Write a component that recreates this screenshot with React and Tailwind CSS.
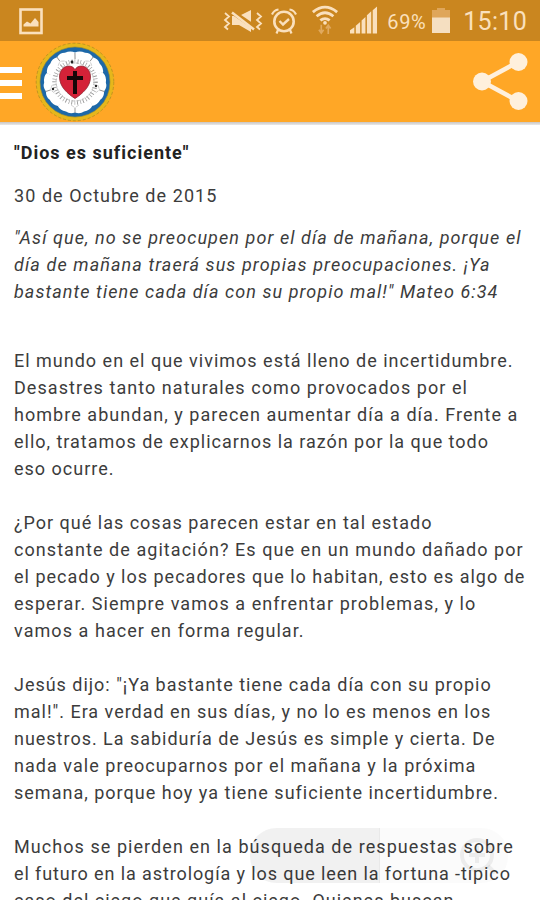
const quote = [
  { text: '"Así que, no se preocupen por el día de mañana, porque el', tracking: 'tracking-[1.07px]' },
  { text: 'día de mañana traerá sus propias preocupaciones. ¡Ya', tracking: 'tracking-[1.09px]' },
  { text: 'bastante tiene cada día con su propio mal!" Mateo 6:34', tracking: 'tracking-[1.06px]' },
];

const paragraphs = [
  [
    { text: 'El mundo en el que vivimos está lleno de incertidumbre.' },
    { text: 'Desastres tanto naturales como provocados por el', tracking: 'tracking-[1.06px]' },
    { text: 'hombre abundan, y parecen aumentar día a día. Frente a', tracking: 'tracking-[1.04px]' },
    { text: 'ello, tratamos de explicarnos la razón por la que todo', tracking: 'tracking-[0.98px]' },
    { text: 'eso ocurre.' },
  ],
  [
    { text: '¿Por qué las cosas parecen estar en tal estado' },
    { text: 'constante de agitación? Es que en un mundo dañado por', tracking: 'tracking-[1.06px]' },
    { text: 'el pecado y los pecadores que lo habitan, esto es algo de' },
    { text: 'esperar. Siempre vamos a enfrentar problemas, y lo', tracking: 'tracking-[1.06px]' },
    { text: 'vamos a hacer en forma regular.', tracking: 'tracking-[1.06px]' },
  ],
  [
    { text: 'Jesús dijo: "¡Ya bastante tiene cada día con su propio', tracking: 'tracking-[0.98px]' },
    { text: 'mal!". Era verdad en sus días, y no lo es menos en los', tracking: 'tracking-[0.98px]' },
    { text: 'nuestros. La sabiduría de Jesús es simple y cierta. De', tracking: 'tracking-[0.98px]' },
    { text: 'nada vale preocuparnos por el mañana y la próxima', tracking: 'tracking-[1.04px]' },
    { text: 'semana, porque hoy ya tiene suficiente incertidumbre.', tracking: 'tracking-[1.01px]' },
  ],
  [
    { text: 'Muchos se pierden en la búsqueda de respuestas sobre', tracking: 'tracking-[1.06px]' },
    { text: 'el futuro en la astrología y los que leen la fortuna -típico', tracking: 'tracking-[0.9px]' },
    { text: 'caso del ciego que guía al ciego. Quienes buscan' },
  ],
];

function Lines({ lines, className = '' }) {
  return (
    <p className={className}>
      {lines.map((line) => (
        <span key={line.text} className={`block whitespace-nowrap ${line.tracking || ''}`}>{line.text}</span>
      ))}
    </p>
  );
}

function PictureIcon() {
  return (
    <svg className="ml-[19px] mt-px h-[27px] w-6" viewBox="0 0 24 27" fill="none">
      <rect x="1.5" y="1.5" width="21" height="23.5" stroke="#fae0bd" strokeWidth="2.6" />
      <path d="M4.500 18.500v-2l3.500-3 3.500 2 4.500-5.500 3.500 4v4.500z" fill="#fae0bd" />
    </svg>
  );
}

function MutedIcon() {
  return (
    <svg className="h-[26px] w-[40px] shrink-0" viewBox="0 0 40 26" fill="none">
      <path d="M9 8h7l12-6v22l-12-7H9z" fill="#fae0bd" />
      <path d="M8 3l26 18" stroke="#ca861f" strokeWidth="5" />
      <path d="M9 4.500l22 17" stroke="#fae0bd" strokeWidth="2.600" />
      <path d="M2 5l4 3.500-4 3.500 4 3.500-4 3.500 3 2.500M34 5l4 3.500-4 3.500 4 3.500-4 3.500 3 2.500" stroke="#fae0bd" strokeWidth="1.800" />
    </svg>
  );
}

function AlarmIcon() {
  return (
    <svg className="ml-2 mt-0.5 h-[27px] w-[26px] shrink-0" viewBox="0 0 26 27" fill="none" stroke="#fae0bd">
      <circle cx="13" cy="13.500" r="9.700" strokeWidth="2.600" />
      <path d="M8.500 13l3.500 3.500 6-5.500" strokeWidth="2.400" />
      <path d="M1 6.500Q3 2 7.500 1.500M25 6.500Q23 2 18.500 1.500M7 22l-1.500 3.500M19 22l1.500 3.500" strokeWidth="2.200" />
    </svg>
  );
}

function WifiIcon() {
  return (
    <svg className="ml-[14px] -mt-0.5 h-8 w-[28px] shrink-0" viewBox="0 0 30 32" fill="none">
      <g stroke="#fae0bd" strokeWidth="3">
        <path d="M2 7.500Q15-3 28 7.500" />
        <path d="M6 12Q15 4.500 24 12" />
        <path d="M10 16.500Q15 12.500 20 16.500" />
      </g>
      <circle cx="15" cy="19" r="2" fill="#fae0bd" />
      <path d="M11 21v9M8.500 26.500l2.500 3.500L13.500 26.500M18.500 31v-9M16 25l2.500-3.500L21 25" stroke="#e0a95e" strokeWidth="1.800" />
    </svg>
  );
}

function SignalIcon() {
  return (
    <svg className="ml-[11px] h-[29px] w-[28px] shrink-0" viewBox="0 0 29 29" fill="#fae0bd">
      <path d="M0 28v-3.500l4.500-3V28zM6 28v-8l4.500-4v12zM12 28V14.500l4-3.500v17zM17.500 28V9l4.500-4v23zM23.500 28V4L28 0v28z" />
    </svg>
  );
}

function BatteryIcon() {
  return (
    <svg className="ml-[6px] h-[26px] w-[18px] shrink-0" viewBox="0 0 18 26">
      <path d="M0 2h5V0h8v2h5v9H0z" fill="#dfa65a" />
      <path d="M0 9.500h18V25H0z" fill="#f5dfc1" />
    </svg>
  );
}

const petals = [36, 108, 180, 252, 324];

function LutherRose() {
  return (
    <svg className="ml-[13px] h-20 w-20 shrink-0" viewBox="-40 -40 80 80">
      <circle r="39" fill="#e6b71b" />
      <circle r="38.800" fill="none" stroke="#b58c22" strokeWidth="0.800" strokeDasharray="3 2" />
      <circle r="35" fill="#1d68a8" stroke="#8c8a3a" strokeWidth="0.600" />
      <circle r="28" fill="#fff" />
      {petals.map((a) => (
        <g key={a} transform={`rotate(${a})`}>
          <path d="M0-30.500Q5-32.500 9-29.500Q15-28.500 17.500-23.500L10-10H-10L-17.500-23.500Q-15-28.500-9-29.500Q-5-32.500 0-30.500Z" fill="#fff" />
          <path d="M0-31v5.500M17-23.500l-3.500 5" stroke="#8d8d8d" strokeWidth="0.900" />
          <path d="M-1-25l-3 2M1-25l3 2" stroke="#c0c0c0" strokeWidth="0.700" />
        </g>
      ))}
      <circle r="20.500" fill="none" stroke="#999" strokeWidth="4.500" strokeDasharray="0.900 1.900 0.600 2.400" />
      <circle r="19" fill="none" stroke="#bdbdbd" strokeWidth="1" strokeDasharray="3 2" />
      <g fill="#222">
        <circle cx="-3" cy="-20" r="1.400" />
        <circle cx="21" cy="4" r="1.200" />
        <circle cx="-22" cy="7" r="1.200" />
      </g>
      <path d="M0 16.500C-7 12-15.500 5-15.500-5C-15.500-16-4-19 0-12.500C4-19 15.500-16 15.500-5C15.500 5 7 12 0 16.500Z" fill="#d42238" stroke="#8e2530" strokeWidth="0.800" />
      <path d="M-2-11h4v5h6v4H2v14h-4V-2h-6v-4h6z" fill="#160708" />
    </svg>
  );
}

function ShareIcon() {
  return (
    <svg className="mr-[12px] h-[60px] w-14 shrink-0" viewBox="0 0 56 60" fill="#fff0dc">
      <path d="M46 10L10 29.500l36 19.500" fill="none" stroke="#fff0dc" strokeWidth="4.500" />
      <circle cx="10" cy="29.500" r="9" />
      <circle cx="46.500" cy="10" r="9" />
      <circle cx="46.500" cy="49" r="9" />
    </svg>
  );
}

function ZoomControls() {
  return (
    <div className="absolute top-[828px] left-[250px] flex h-[55px] w-[258px] overflow-hidden rounded-[26px] bg-black/[0.015]">
      <div className="w-[130px] border-r border-black/[0.03] bg-black/[0.04]" />
      <svg className="ml-[78px] mt-[6px] h-11 w-11" viewBox="0 0 44 44" fill="none" stroke="#000" strokeOpacity="0.06" strokeWidth="4">
        <circle cx="19" cy="21" r="15" />
        <path d="M19 12v17M11 21h16M30 32l7 7" />
      </svg>
    </div>
  );
}

export default function App() {
  return (
    <div className="relative flex h-[900px] w-[540px] flex-col overflow-hidden bg-white font-['Roboto',sans-serif] text-[#3c3c3c]">
      {/* Status bar */}
      <div className="flex h-[41px] shrink-0 items-center justify-between bg-[#ca861f] text-[#fae0bd]">
        <PictureIcon />
        <div className="flex items-center pr-[13px]">
          <MutedIcon />
          <AlarmIcon />
          <WifiIcon />
          <SignalIcon />
          <span className="ml-[9px] pt-[3px] text-[20px] tracking-[0.6px]">69%</span>
          <BatteryIcon />
          <span className="ml-[13px] pt-[3px] text-[25px] tracking-[0.3px]">15:10</span>
        </div>
      </div>

      {/* App bar */}
      <header className="flex h-[81px] shrink-0 items-center bg-[#ffa726]">
        <div className="mt-0.5 flex w-[22px] flex-col gap-[7px]">
          <div className="h-1.5 bg-white" />
          <div className="h-1.5 bg-white" />
          <div className="h-1.5 bg-white" />
        </div>
        <LutherRose />
        <div className="flex-1" />
        <ShareIcon />
      </header>
      <div className="h-[3px] shrink-0 bg-linear-to-b from-[#c9c5c2] to-[#e9e9e9]" />

      {/* Article */}
      <article className="px-[14px] pt-[14px] text-[18px] leading-[27px] tracking-[1px]">
        <h1 className="font-bold text-[#222]">"Dios es suficiente"</h1>
        <p className="mt-4 tracking-[1.06px]">30 de Octubre de 2015</p>
        <Lines lines={quote} className="mt-[15px] italic" />
        <div className="mt-[42px] flex flex-col gap-[27px]">
          {paragraphs.map((lines) => <Lines key={lines[0].text} lines={lines} />)}
        </div>
      </article>

      <ZoomControls />
    </div>
  );
}
